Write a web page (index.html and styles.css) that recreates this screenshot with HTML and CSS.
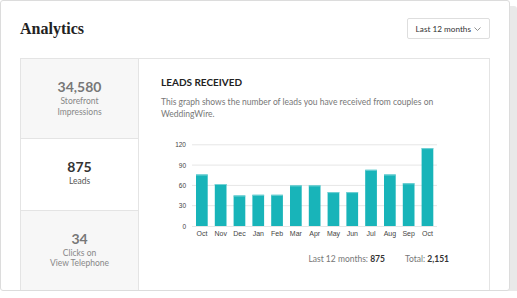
FILE: index.html
```html
<!DOCTYPE html>
<html lang="en">
  <head>
    <meta charset="utf-8">
    <link rel="stylesheet" href="styles.css">
    <title>Analytics</title>
  </head>
  <body>
    <div class="card">
      <div class="header">
        <h1>Analytics</h1>
        <button class="range">Last 12 months
          <svg class="chevron" width="7" height="4" viewBox="0 0 7 4"><path d="M0.5 0.5 L3.5 3.5 L6.5 0.5" fill="none" stroke="#777" stroke-width="0.8"/></svg>
        </button>
      </div>
      <div class="panel">
        <div class="stats">
          <div class="stat">
            <div class="num">34,580</div>
            <div class="label">Storefront<br>Impressions</div>
          </div>
          <div class="stat active">
            <div class="num">875</div>
            <div class="label">Leads</div>
          </div>
          <div class="stat">
            <div class="num">34</div>
            <div class="label">Clicks on<br>View Telephone</div>
          </div>
        </div>
        <div class="content">
          <h2>LEADS RECEIVED</h2>
          <p class="desc">This graph shows the number of leads you have received from couples on WeddingWire.</p>
          <svg class="chart" width="280" height="102" viewBox="0 0 280 102">
            <g class="grid">
              <line x1="31" x2="276" y1="6.8" y2="6.8"/>
              <line x1="31" x2="276" y1="27.1" y2="27.1"/>
              <line x1="31" x2="276" y1="47.4" y2="47.4"/>
              <line x1="31" x2="276" y1="67.7" y2="67.7"/>
              <line x1="31" x2="276" y1="88.5" y2="88.5"/>
            </g>
            <g class="ylabels">
              <text x="25" y="9.3">120</text>
              <text x="25" y="29.6">90</text>
              <text x="25" y="49.9">60</text>
              <text x="25" y="70.2">30</text>
              <text x="25" y="90.8">0</text>
            </g>
            <g class="bars">
              <rect x="35.0" y="36.5" width="11.7" height="51.5"/>
              <rect x="53.8" y="46.0" width="11.7" height="42.0"/>
              <rect x="72.6" y="57.5" width="11.7" height="30.5"/>
              <rect x="91.4" y="56.8" width="11.7" height="31.2"/>
              <rect x="110.2" y="56.8" width="11.7" height="31.2"/>
              <rect x="129.0" y="47.4" width="11.7" height="40.6"/>
              <rect x="147.8" y="47.4" width="11.7" height="40.6"/>
              <rect x="166.6" y="54.1" width="11.7" height="33.9"/>
              <rect x="185.4" y="54.1" width="11.7" height="33.9"/>
              <rect x="204.2" y="31.8" width="11.7" height="56.2"/>
              <rect x="223.0" y="36.5" width="11.7" height="51.5"/>
              <rect x="241.8" y="45.3" width="11.7" height="42.7"/>
              <rect x="260.6" y="10.1" width="11.7" height="77.9"/>
            </g>
            <g class="tops">
              <rect x="35.0" y="36.5" width="11.7" height="1"/>
              <rect x="53.8" y="46.0" width="11.7" height="1"/>
              <rect x="72.6" y="57.5" width="11.7" height="1"/>
              <rect x="91.4" y="56.8" width="11.7" height="1"/>
              <rect x="110.2" y="56.8" width="11.7" height="1"/>
              <rect x="129.0" y="47.4" width="11.7" height="1"/>
              <rect x="147.8" y="47.4" width="11.7" height="1"/>
              <rect x="166.6" y="54.1" width="11.7" height="1"/>
              <rect x="185.4" y="54.1" width="11.7" height="1"/>
              <rect x="204.2" y="31.8" width="11.7" height="1"/>
              <rect x="223.0" y="36.5" width="11.7" height="1"/>
              <rect x="241.8" y="45.3" width="11.7" height="1"/>
              <rect x="260.6" y="10.1" width="11.7" height="1"/>
            </g>
            <g class="xlabels">
              <text x="40.9" y="97.5">Oct</text>
              <text x="59.7" y="97.5">Nov</text>
              <text x="78.5" y="97.5">Dec</text>
              <text x="97.3" y="97.5">Jan</text>
              <text x="116.1" y="97.5">Feb</text>
              <text x="134.9" y="97.5">Mar</text>
              <text x="153.7" y="97.5">Apr</text>
              <text x="172.5" y="97.5">May</text>
              <text x="191.3" y="97.5">Jun</text>
              <text x="210.1" y="97.5">Jul</text>
              <text x="228.9" y="97.5">Aug</text>
              <text x="247.7" y="97.5">Sep</text>
              <text x="266.5" y="97.5">Oct</text>
            </g>
          </svg>
          <div class="totals">
            <span>Last 12 months: <b>875</b></span>
            <span>Total: <b>2,151</b></span>
          </div>
        </div>
      </div>
    </div>
  </body>
</html>
```

FILE: styles.css
```css
body {
  margin: 0;
  background: #fff;
  font-family: Lato, "Liberation Sans", sans-serif;
}
.card {
  box-sizing: border-box;
  width: 510px;
  height: 291px;
  padding: 17px 19px 0;
  border: 1px solid #dcdcdc;
  border-radius: 3px;
  background: #fff;
  box-shadow: 7px 6px 0 #e9e9e9;
  display: flex;
  flex-direction: column;
  overflow: hidden;
}
.header {
  display: flex;
  justify-content: space-between;
  align-items: center;
  height: 21px;
  margin-bottom: 19px;
}
h1 {
  margin: 0;
  font-family: "Liberation Serif", serif;
  font-size: 16px;
  font-weight: bold;
  color: #222;
}
.range {
  box-sizing: border-box;
  height: 21px;
  padding: 0 8px;
  border: 1px solid #dedede;
  border-radius: 2px;
  background: #fff;
  font-family: Lato, sans-serif;
  font-size: 8.2px;
  color: #333;
  display: flex;
  align-items: center;
  gap: 3px;
}
.chevron {
  display: block;
}
.panel {
  flex: 1;
  display: flex;
  border: 1px solid #e4e4e4;
  border-bottom: none;
}
.stats {
  width: 117px;
  border-right: 1px solid #e4e4e4;
  flex-shrink: 0;
}
.stat {
  padding: 19px 0 21px;
  border-bottom: 1px solid #e4e4e4;
  background: #f7f7f7;
  text-align: center;
  color: #888;
}
.stat.active {
  background: #fff;
  padding-bottom: 23px;
}
.stat:last-child {
  border-bottom: none;
  height: 100px;
}
.num {
  font-size: 14px;
  font-weight: bold;
  line-height: 18px;
  color: #777;
}
.active .num {
  color: #333;
}
.active .label {
  color: #555;
}
.label {
  font-size: 8.5px;
  line-height: 10.5px;
}
.content {
  flex: 1;
  padding: 16px 0 0 22px;
}
h2 {
  margin: 0;
  font-size: 10px;
  line-height: 14px;
  font-weight: bold;
  color: #222;
}
.desc {
  margin: 7px 0 0;
  width: 290px;
  font-size: 8.5px;
  line-height: 12px;
  color: #777;
}
.chart {
  display: block;
  margin-top: 18px;
}
.grid line {
  stroke: #e6e6e6;
  stroke-width: 1;
}
.bars rect {
  fill: #18b4b9;
}
.tops rect {
  fill: #74d2d5;
}
.ylabels text {
  font-family: "Liberation Sans", sans-serif;
  font-size: 6.5px;
  fill: #444;
  text-anchor: end;
}
.xlabels text {
  font-family: "Liberation Sans", sans-serif;
  font-size: 7px;
  fill: #444;
  text-anchor: middle;
}
.totals {
  display: flex;
  justify-content: flex-end;
  gap: 20px;
  margin: 13px 40px 0 0;
  font-size: 8.5px;
  line-height: 12px;
  color: #777;
}
.totals b {
  color: #333;
}
```
